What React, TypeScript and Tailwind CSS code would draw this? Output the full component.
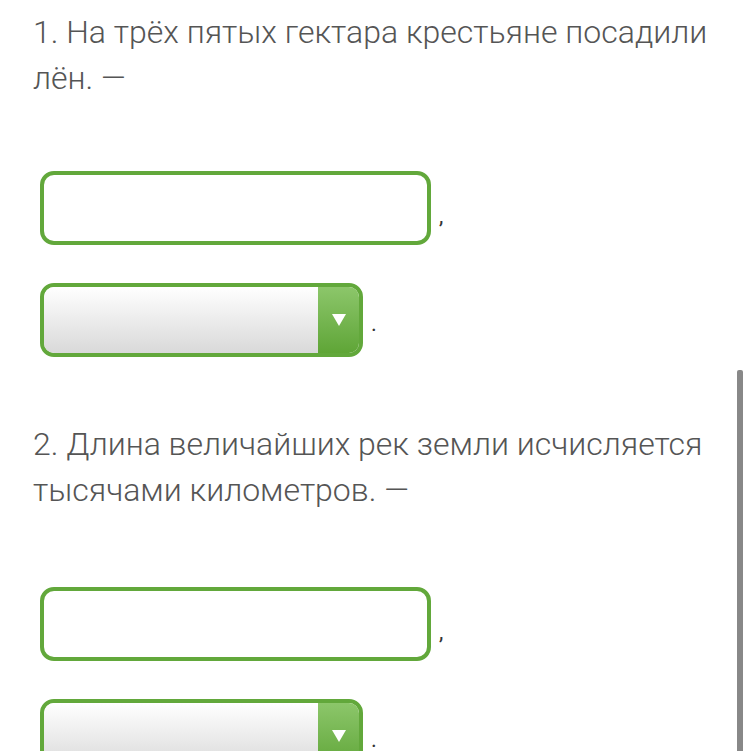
import type { ReactNode } from 'react';

function TextBox() {
  return (
    <div className="flex items-end gap-2">
      <div className="h-[74px] w-[391px] rounded-[14px] border-[4px] border-[#62a83b] bg-white" />
      <span className="mb-[18px] text-[22px] leading-none text-[#333]">,</span>
    </div>
  );
}

function SelectBox() {
  return (
    <div className="flex items-end gap-2">
      <div className="flex h-[74px] w-[323px] overflow-hidden rounded-[14px] border-[4px] border-[#62a83b]">
        <div className="flex-1 bg-gradient-to-b from-white to-[#d9d9d9]" />
        <div className="flex w-[41px] items-center justify-center bg-gradient-to-b from-[#8cc66a] to-[#5fa536]">
          <svg width="14" height="12" viewBox="0 0 14 12">
            <polygon points="0,0 14,0 7,12" fill="#fff" />
          </svg>
        </div>
      </div>
      <span className="mb-[22px] text-[22px] leading-none text-[#333]">.</span>
    </div>
  );
}

function Task({ children, space }: { children: ReactNode; space: string }) {
  return (
    <div className="flex flex-col">
      <p className="pr-[2px] text-[32px] font-light leading-[46px] text-[#555]">{children}</p>
      <div className={`${space} flex flex-col gap-[38px] pl-[7px]`}>
        <TextBox />
        <SelectBox />
      </div>
    </div>
  );
}

export default function App() {
  return (
    <div className="relative h-[751px] w-[750px] overflow-hidden bg-white font-['Roboto',sans-serif]">
      <div className="flex flex-col gap-[64px] pl-[33px] pt-[9px]">
        <Task space="mt-[70px]">1. На трёх пятых гектара крестьяне посадили лён. —</Task>
        <Task space="mt-[74px]">2. Длина величайших рек земли исчисляется тысячами километров. —</Task>
      </div>
      <div className="absolute right-[7px] top-[370px] h-[400px] w-[6px] rounded-t-[2px] bg-[#888]" />
    </div>
  );
}
